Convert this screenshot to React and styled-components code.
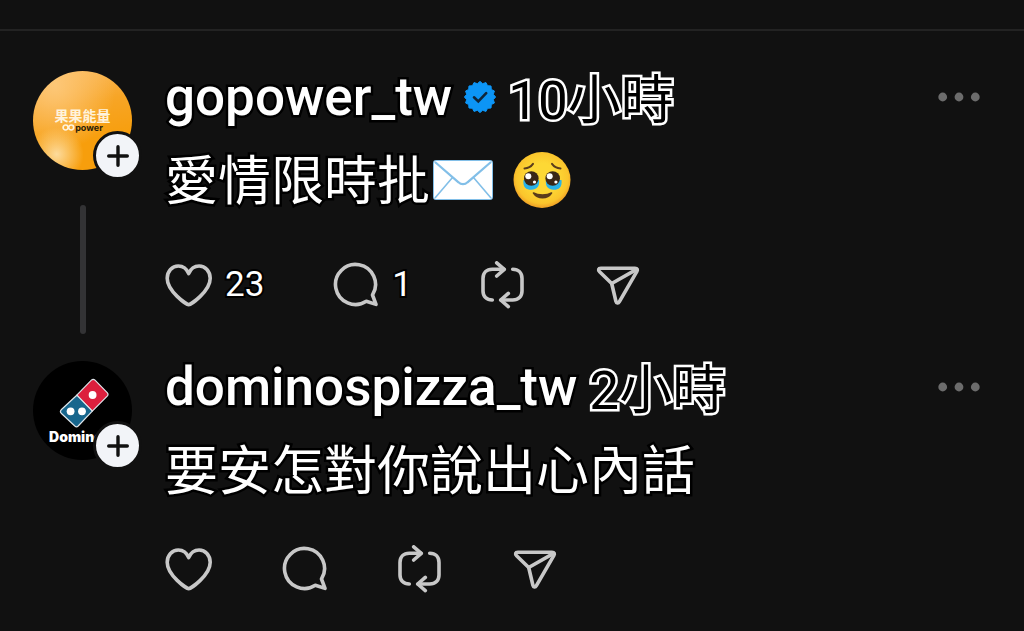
import styled, { createGlobalStyle } from "styled-components";

const GlobalStyle = createGlobalStyle`
  * {
    box-sizing: border-box;
  }
  body {
    margin: 0;
    background-color: #111111;
    color: #ffffff;
    font-family: Roboto, "Noto Sans CJK TC", sans-serif;
  }
`;

const HeartIcon = () => (
  <IconStyled viewBox="0 0 48 48" aria-hidden="true">
    <path d="M23.7 43.6C21.6 43.6 2.2 30.4 2.2 17.3C2.2 10.2 7.2 5 13.3 5C18 5 21.7 7.8 23.7 12.6C25.7 7.8 29.4 5 34.1 5C40.2 5 45.2 10.2 45.2 17.3C45.2 30.4 25.8 43.6 23.7 43.6Z" />
  </IconStyled>
);

const CommentIcon = () => (
  <IconStyled viewBox="0 0 48 48" aria-hidden="true">
    <path d="M40.5 34A20 20 0 1 0 34.3 40.3L44 43.4Z" />
  </IconStyled>
);

const RepostIcon = () => (
  <IconStyled viewBox="2 0 48 48" aria-hidden="true">
    <path d="M14.3 39C8.5 39 5 35.5 5 30V17.5C5 12 8.5 8.3 14.3 8.3H26" />
    <path d="M18.7 1.8L26.3 8.3L18.7 15" />
    <path d="M34.7 8.3C40.5 8.3 44 12 44 17.5V30C44 35.5 40.5 39 34.7 39H23" />
    <path d="M30.3 32.4L22.7 39L30.3 45.6" />
  </IconStyled>
);

const SendIcon = () => (
  <IconStyled viewBox="2 0 48 48" aria-hidden="true">
    <path d="M6.8 7.2H41C43.2 7.2 43.9 8.6 42.9 10.4L25.4 40.6C24.3 42.5 22.4 42.2 21.9 40.2L17.7 22.5L5.6 10.7C3.9 9 4.4 7.2 6.8 7.2Z" />
    <path d="M17.7 22.5L42.6 8.4" />
  </IconStyled>
);

const MoreIcon = () => (
  <svg width="42" height="10" viewBox="0 0 42 10" fill="#6c6c6c" aria-hidden="true">
    <circle cx="4.7" cy="5" r="4.4" />
    <circle cx="21" cy="5" r="4.4" />
    <circle cx="37.3" cy="5" r="4.4" />
  </svg>
);

const PlusIcon = () => (
  <svg width="22" height="22" viewBox="0 0 22 22" aria-hidden="true">
    <path d="M11 1.7V20.3M1.7 11H20.3" stroke="#111111" strokeWidth="3.4" strokeLinecap="round" />
  </svg>
);

// 16 point scalloped seal
const sealPoints = Array.from({ length: 32 }, (_, i) => {
  const r = i % 2 ? 13.6 : 15.6;
  const a = (i * Math.PI) / 16;
  return `${16 + r * Math.cos(a)},${16 + r * Math.sin(a)}`;
}).join(" ");

const VerifiedIcon = () => (
  <svg width="32" height="32" viewBox="0 0 32 32" role="img" aria-label="verified">
    <polygon points={sealPoints} fill="#0c95f6" stroke="#0c95f6" strokeLinejoin="round" />
    <path
      d="M10 16.3L14.3 20.4L22.2 12.2"
      fill="none"
      stroke="#10263a"
      strokeWidth="2.6"
      strokeLinecap="round"
    />
  </svg>
);

const EnvelopeEmoji = () => (
  <svg width="60" height="40" viewBox="0 0 60 40" role="img" aria-label="envelope">
    <rect x="1" y="1" width="58" height="38" rx="2" fill="#ffffff" stroke="#82bfe8" strokeWidth="2" />
    <path
      d="M2 38L19.5 17.5M58 38L40.5 17.5"
      fill="none"
      stroke="#82bfe8"
      strokeWidth="1.6"
    />
    <path
      d="M2 2L25.5 22.3C28 24.8 32 24.8 34.5 22.3L58 2"
      fill="none"
      stroke="#82bfe8"
      strokeWidth="2.2"
    />
  </svg>
);

const TearyEmoji = () => (
  <svg width="58" height="58" viewBox="0 0 58 58" role="img" aria-label="face holding back tears">
    <defs>
      <radialGradient id="skin" cx="50%" cy="46%" r="52%">
        <stop offset="50%" stopColor="#fdd835" />
        <stop offset="88%" stopColor="#fbc52c" />
        <stop offset="100%" stopColor="#f2a727" />
      </radialGradient>
    </defs>
    <ellipse cx="29" cy="29" rx="28.5" ry="28" fill="url(#skin)" />
    <path
      d="M11.5 17.5C15 17.2 18 15.6 20 12.8M47.5 17.5C44 17.2 41 15.6 39 12.8"
      fill="none"
      stroke="#5b3d1c"
      strokeWidth="2"
      strokeLinecap="round"
    />
    <path d="M10.5 29C9.5 37 14 39 18.5 38.8C23.5 38.6 27 35.5 26 29Z" fill="#29b2e8" />
    <path d="M48.5 29C49.5 37 45 39 40.5 38.8C35.5 38.6 32 35.5 33 29Z" fill="#29b2e8" />
    <circle cx="18.3" cy="27.5" r="7.3" fill="#3a2717" />
    <circle cx="39.7" cy="27.5" r="7.3" fill="#3a2717" />
    <circle cx="15.3" cy="25.2" r="3" fill="#ffffff" />
    <circle cx="36.7" cy="25.2" r="3" fill="#ffffff" />
    <circle cx="21.5" cy="31" r="1.6" fill="#ffffff" />
    <circle cx="42.9" cy="31" r="1.6" fill="#ffffff" />
    <path
      d="M20.5 42C24.5 48.2 34.5 48.2 38.5 42C34 44.6 25 44.6 20.5 42Z"
      fill="#5b3d1c"
      stroke="#5b3d1c"
      strokeWidth="1.6"
      strokeLinejoin="round"
    />
  </svg>
);

const GopowerLogo = () => (
  <GopowerStyled>
    <span className="zh">果果能量</span>
    <span className="en">
      <svg width="13" height="7" viewBox="0 0 13 7" aria-hidden="true">
        <circle cx="3.6" cy="3.5" r="2.5" fill="none" stroke="#fff3dc" strokeWidth="1.7" />
        <circle cx="9.2" cy="3.5" r="2.5" fill="none" stroke="#fff3dc" strokeWidth="1.7" />
      </svg>
      power
    </span>
  </GopowerStyled>
);

const DominosLogo = () => (
  <DominosStyled>
    <svg width="52" height="52" viewBox="0 0 52 52" aria-hidden="true">
      <g stroke="#dfe5ea" strokeWidth="1.2" strokeLinejoin="round">
        <path d="M19.8 18.2L34.4 3.2Q36.2 1.4 38 3.2L50.2 15.6Q51.8 17.4 50.2 19.2L35.3 34.2Z" fill="#dc1f3d" />
        <path d="M19.8 18.2L35.3 34.2L21.2 49Q19.6 50.6 17.8 49L4.2 36.2Q2.6 34.5 4.2 32.8Z" fill="#17668d" />
      </g>
      <circle cx="35.6" cy="18" r="3.9" fill="#ffffff" />
      <circle cx="13.6" cy="34.3" r="3.9" fill="#ffffff" />
      <circle cx="25" cy="34.3" r="3.9" fill="#ffffff" />
    </svg>
    <span>Domino's</span>
  </DominosStyled>
);

const Action = ({ label, icon, count }) => (
  <ActionStyled type="button" aria-label={count ? `${label} ${count}` : label}>
    {icon}
    {count && <span>{count}</span>}
  </ActionStyled>
);

const Post = ({ user, logo, verified, time, children, likes, replies, thread }) => (
  <PostStyled>
    <Aside>
      <AvatarWrap>
        {logo}
        <FollowButton type="button" aria-label={`follow ${user}`}>
          <PlusIcon />
        </FollowButton>
      </AvatarWrap>
      {thread && <ThreadLine />}
    </Aside>
    <Content $thread={thread}>
      <Heading>
        <UserName href={`#${user}`}>{user}</UserName>
        {verified && <VerifiedIcon />}
        <Time>{time}</Time>
        <MoreButton type="button" aria-label="more">
          <MoreIcon />
        </MoreButton>
      </Heading>
      <Body>{children}</Body>
      <Actions>
        <Action label="like" icon={<HeartIcon />} count={likes} />
        <Action label="reply" icon={<CommentIcon />} count={replies} />
        <Action label="repost" icon={<RepostIcon />} />
        <Action label="send" icon={<SendIcon />} />
      </Actions>
    </Content>
  </PostStyled>
);

const App = () => {
  return (
    <>
      <GlobalStyle />
      <TopBar />
      <Feed>
        <Post
          user="gopower_tw"
          logo={<GopowerLogo />}
          verified
          time="10小時"
          likes="23"
          replies="1"
          thread
        >
          <span>愛情限時批</span>
          <Emojis>
            <EnvelopeEmoji />
            <TearyEmoji />
          </Emojis>
        </Post>
        <Post user="dominospizza_tw" logo={<DominosLogo />} time="2小時">
          <span>要安怎對你說出心內話</span>
        </Post>
      </Feed>
    </>
  );
};

const TopBar = styled.header`
  height: 31px;
  border-bottom: solid 2px #232323;
`;

const Feed = styled.main`
  padding: 40px 44px 0 33px;
`;

const PostStyled = styled.article`
  display: flex;
  gap: 33px;
`;

const Aside = styled.div`
  display: flex;
  flex-direction: column;
  align-items: center;
  flex-shrink: 0;
`;

const AvatarWrap = styled.div`
  position: relative;
  width: 99px;
  height: 99px;
`;

const Logo = styled.div`
  width: 100%;
  height: 100%;
  border-radius: 50%;
  overflow: hidden;
  display: flex;
  flex-direction: column;
  align-items: center;
`;

const GopowerStyled = styled(Logo)`
  justify-content: center;
  background: radial-gradient(circle at 24% 84%, #fddb9c 0, transparent 24%),
    radial-gradient(ellipse at 22% 14%, #fdc777 0, transparent 56%),
    linear-gradient(170deg, #fbb95c 0%, #f7a526 35%, #f79e0c 70%);
  .zh {
    color: #fff3dc;
    font-size: 14px;
    line-height: 14px;
    font-weight: 700;
  }
  .en {
    display: flex;
    align-items: center;
    color: #2a1c08;
    font-family: Inter, sans-serif;
    font-size: 9px;
    line-height: 10px;
    font-weight: 700;
  }
`;

const DominosStyled = styled(Logo)`
  padding-top: 16px;
  background-color: #000000;
  span {
    font-family: Inter, sans-serif;
    font-size: 14px;
    line-height: 16px;
    font-weight: 900;
  }
`;

const FollowButton = styled.button`
  position: absolute;
  right: -10px;
  bottom: -10px;
  width: 49px;
  height: 49px;
  padding: 0;
  display: grid;
  place-items: center;
  border: solid 3px #111111;
  border-radius: 50%;
  background-color: #f2f4f8;
  cursor: pointer;
`;

const ThreadLine = styled.div`
  flex: 1;
  width: 6px;
  margin: 35px 0 27px;
  border-radius: 3px;
  background-color: #333335;
`;

const Content = styled.div`
  flex: 1;
  min-width: 0;
  padding-bottom: ${({ $thread }) => ($thread ? "52px" : "0")};
`;

const Heading = styled.div`
  display: flex;
  align-items: center;
  gap: 12px;
  height: 52px;
`;

const UserName = styled.a`
  color: #ffffff;
  font-size: 53px;
  line-height: 52px;
  font-weight: 500;
  text-decoration: none;
  -webkit-text-stroke: 5px #000000;
  paint-order: stroke fill;
`;

const Time = styled.time`
  padding-top: 8px;
  color: #000000;
  font-size: 53px;
  line-height: 52px;
  white-space: nowrap;
  -webkit-text-stroke: 5px #ffffff;
  paint-order: stroke fill;
`;

const MoreButton = styled.button`
  display: flex;
  margin-left: auto;
  padding: 0;
  border: none;
  background: none;
  cursor: pointer;
`;

const Body = styled.div`
  display: flex;
  align-items: flex-start;
  margin-top: 15px;
  font-family: "Noto Sans CJK TC", sans-serif;
  font-size: 53px;
  line-height: 78px;
  -webkit-text-stroke: 5px #000000;
  paint-order: stroke fill;
`;

const Emojis = styled.span`
  display: flex;
  align-items: center;
  gap: 20px;
  height: 84px;
  padding-left: 3px;
  -webkit-text-stroke: 0;
`;

const Actions = styled.div`
  display: flex;
  gap: 68px;
  margin-top: 39px;
`;

const ActionStyled = styled.button`
  display: flex;
  align-items: center;
  gap: 12px;
  padding: 0;
  border: none;
  background: none;
  color: #ffffff;
  font-family: Roboto, sans-serif;
  font-size: 35px;
  line-height: 48px;
  cursor: pointer;
  span {
    -webkit-text-stroke: 4px #000000;
    paint-order: stroke fill;
  }
`;

const IconStyled = styled.svg`
  width: 48px;
  height: 48px;
  fill: none;
  stroke: #c8c8c8;
  stroke-width: 3.6;
  stroke-linecap: round;
  stroke-linejoin: round;
`;

export default App;
